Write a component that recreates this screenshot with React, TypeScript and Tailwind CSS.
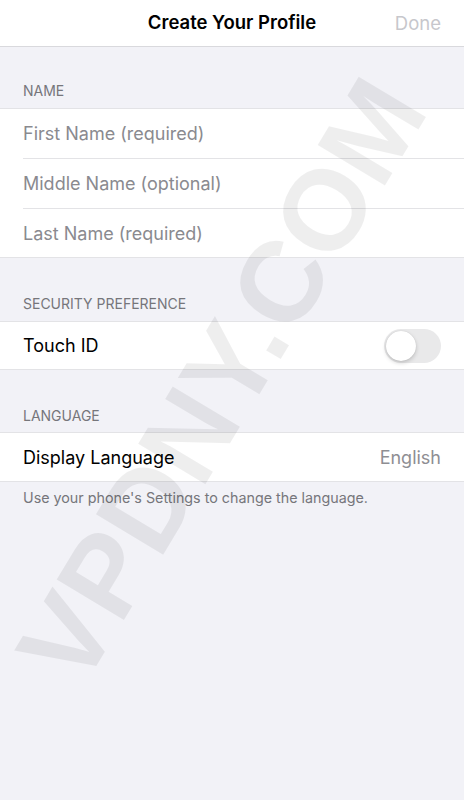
import React from "react";

const font = { fontFamily: "Inter, 'Liberation Sans', sans-serif" };

function Row({ children, h, last }: { children: React.ReactNode; h: string; last?: boolean }) {
  return (
    <div className="pl-[23px] bg-white">
      <div className={`${h} flex items-center pr-[23px] ${last ? "" : "border-b border-[#e3e3e6]"}`}>
        {children}
      </div>
    </div>
  );
}

export default function App() {
  return (
    <div className="relative w-[464px] h-[800px] bg-[#f2f2f7] overflow-hidden" style={font}>
      <div className="h-[47px] bg-white border-b border-[#d9d9dd] flex items-center justify-center relative">
        <span className="text-[18.5px] font-semibold text-black">Create Your Profile</span>
        <span className="absolute right-[23px] top-[10px] text-[18.5px] text-[#c7c7cc]">Done</span>
      </div>
      <div className="h-[61px] flex items-end pb-[7px] pl-[23px] text-[14px] text-[#76767b]">NAME</div>
      <div className="border-y border-[#e3e3e6]">
        <Row h="h-[50px]"><span className="text-[18px] text-[#8a8a8f]">First Name (required)</span></Row>
        <Row h="h-[50px]"><span className="text-[18px] text-[#8a8a8f]">Middle Name (optional)</span></Row>
        <Row h="h-[48px]" last><span className="text-[18px] text-[#8a8a8f]">Last Name (required)</span></Row>
      </div>
      <div className="h-[63px] flex items-end pb-[7px] pl-[23px] text-[14px] text-[#76767b]">SECURITY PREFERENCE</div>
      <div className="border-y border-[#e3e3e6]">
        <Row h="h-[47px]" last>
          <span className="text-[18px] text-black flex-1">Touch ID</span>
          <div className="w-[57px] h-[34px] rounded-full bg-[#e9e9ea] p-[2px] flex items-center">
            <div className="w-[30px] h-[30px] rounded-full bg-white shadow-[0_2px_4px_rgba(0,0,0,0.18),0_0_1px_rgba(0,0,0,0.15)]" />
          </div>
        </Row>
      </div>
      <div className="h-[62px] flex items-end pb-[6px] pl-[23px] text-[14px] text-[#76767b]">LANGUAGE</div>
      <div className="border-y border-[#e3e3e6]">
        <Row h="h-[48px]" last>
          <span className="text-[18px] text-black flex-1">Display Language</span>
          <span className="text-[18px] text-[#8e8e93]">English</span>
        </Row>
      </div>
      <div className="pl-[23px] pt-[5px] text-[14.3px] text-[#76767b]">
        Use your phone's Settings to change the language.
      </div>
      <div
        aria-hidden="true"
        className="pointer-events-none absolute left-[222px] top-[381px] whitespace-nowrap font-bold text-[114px] leading-none text-black/[0.065]"
        style={{ fontFamily: "'Liberation Sans', sans-serif", transform: "translate(-50%, -50%) rotate(-59deg)" }}
      >
        VPDNY.COM
      </div>
    </div>
  );
}
